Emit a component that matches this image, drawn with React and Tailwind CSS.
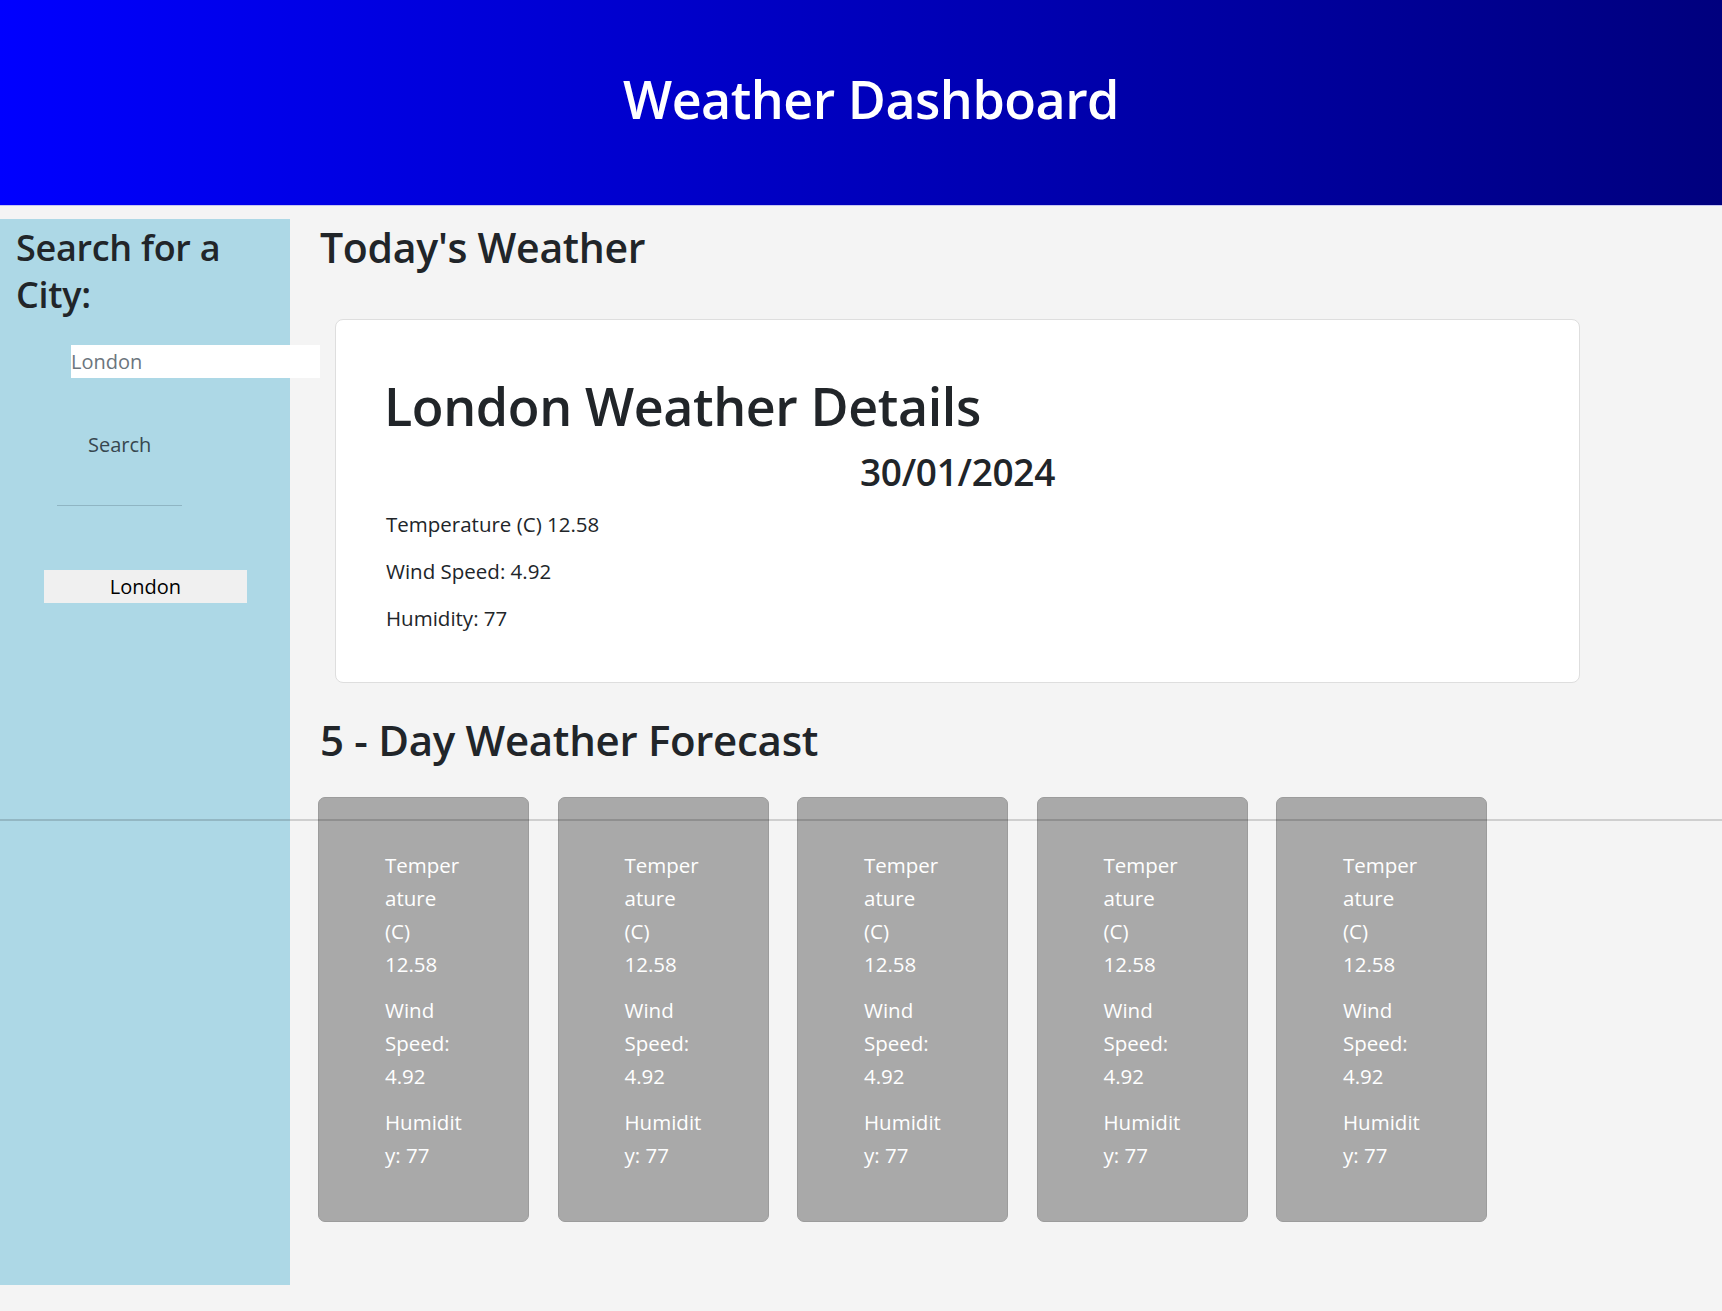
import React from 'react';

const forecast = [1, 2, 3, 4, 5];

function ForecastCard() {
  return (
    <div className="w-[211px] h-[425px] shrink-0 rounded-[7px] border border-[#9c9c9c] bg-[#a9a9a9] pt-[51px] pl-[66px] text-white text-[20.5px] leading-[33px]">
      <p className="mb-[13px]">
        <span className="block">Temper</span>
        <span className="block">ature</span>
        <span className="block">(C)</span>
        <span className="block">12.58</span>
      </p>
      <p className="mb-[13px]">
        <span className="block">Wind</span>
        <span className="block">Speed:</span>
        <span className="block">4.92</span>
      </p>
      <p>
        <span className="block">Humidit</span>
        <span className="block">y: 77</span>
      </p>
    </div>
  );
}

export default function App() {
  return (
    <div
      className="relative min-h-[1311px] bg-[#f4f4f4] text-[#212529]"
      style={{ fontFamily: '"Open Sans", "Noto Sans", sans-serif' }}
    >
      {/* Header */}
      <header className="h-[206px] flex items-center justify-center pl-[20px] bg-gradient-to-r from-[#0000ff] to-[#00007e] border-b border-[#c4c4f2]">
        <h1 className="text-white text-[52px] font-semibold tracking-[-0.5px] pb-[8px]">Weather Dashboard</h1>
      </header>

      <div className="flex pt-[13px]">
        {/* Sidebar */}
        <aside className="w-[290px] h-[1066px] shrink-0 bg-[#add8e6] pt-[5px] pl-[16px]">
          <h2 className="text-[36px] leading-[47px] font-semibold tracking-[-0.3px]">Search for a<br />City:</h2>
          <div className="mt-[27px] ml-[55px]">
            <input
              type="text"
              defaultValue="London"
              className="block w-[249px] h-[33px] bg-white text-[20px] text-[#6c757d] outline-none relative z-10"
            />
          </div>
          <button className="block h-[30px] leading-[30px] mt-[52px] ml-[72px] text-[20px] text-[#37474f]">Search</button>
          <div className="mt-[45px] ml-[41px] w-[125px] h-px bg-[#8fb5c3]"></div>
          <button className="block mt-[64px] ml-[28px] w-[203px] h-[33px] bg-[#f0f0f0] text-[20px] text-black">London</button>
        </aside>

        {/* Main */}
        <main className="flex-1 pl-[30px]">
          <h2 className="text-[41px] leading-[49px] font-semibold tracking-[-0.3px] mt-[4px]">Today's Weather</h2>

          <section className="mt-[47px] ml-[15px] w-[1245px] h-[364px] bg-white border border-[#dedede] rounded-[8px] pt-[55px] pl-[48px]">
            <h2 className="text-[52px] leading-[61px] font-semibold tracking-[-0.4px]">London Weather Details</h2>
            <h3 className="text-center pr-[48px] text-[37px] leading-[43px] font-semibold tracking-[-0.3px] mt-[14px]">30/01/2024</h3>
            <div className="mt-[15px] ml-[2px] text-[20.5px] leading-[33px]">
              <p className="mb-[14px]">Temperature (C) 12.58</p>
              <p className="mb-[14px]">Wind Speed: 4.92</p>
              <p>Humidity: 77</p>
            </div>
          </section>

          <h2 className="text-[42px] leading-[49px] font-semibold tracking-[-0.3px] mt-[32px]">5 - Day Weather Forecast</h2>

          <div className="flex gap-[28.5px] mt-[33px] ml-[-2px]">
            {forecast.map((d) => (
              <ForecastCard key={d} />
            ))}
          </div>
        </main>
      </div>

      {/* stray rule crossing the page */}
      <div className="absolute left-0 right-0 top-[819px] h-[2px] bg-black/15 z-20 pointer-events-none"></div>
    </div>
  );
}
